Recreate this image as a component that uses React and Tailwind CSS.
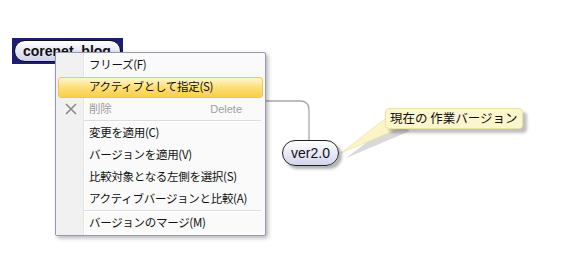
import React from "react";

const jp = { fontFamily: '"Noto Sans CJK JP", "Noto Sans", sans-serif' };

function Item({ label, right, icon, active, disabled }) {
  return (
    <div className="relative h-[22px] flex items-center">
      {active && (
        <div className="absolute left-[2px] right-[2px] top-[1px] bottom-0 rounded-[3px] border border-[#e8c66a] bg-gradient-to-b from-[#fff6cf] via-[#fddf76] to-[#f8cf4a]" />
      )}
      <div className="relative w-[30px] h-full flex items-center justify-center">
        {icon}
      </div>
      <div
        className={`relative pl-[3px] text-[11.5px] tracking-[-0.3px] leading-none ${disabled ? "text-[#9a9a9a]" : "text-[#111]"}`}
        style={jp}
      >
        {label}
      </div>
      {right && (
        <div className="relative ml-auto mr-[23px] text-[11px] text-[#a0a0a0] font-['Liberation_Sans',sans-serif]">
          {right}
        </div>
      )}
    </div>
  );
}

function Sep() {
  return (
    <div className="h-[2px] flex">
      <div className="w-[28px]" />
      <div className="flex-1 mr-[4px] border-t border-[#dcdcdc] border-b border-b-white" />
    </div>
  );
}

export default function App() {
  return (
    <div className="relative w-[566px] h-[271px] bg-white overflow-hidden">
      {/* connector line */}
      <svg className="absolute left-0 top-0" width="566" height="271">
        <path d="M262 101 H300 Q309 101 309 110 V141" fill="none" stroke="#a8a8a8" strokeWidth="1.3" />
        {/* callout tail shadow */}
        <polygon points="395,121 410,131 346,158" fill="#c9c9c9" opacity="0.7" />
        <polygon points="390,115 403,127 341,153" fill="#fbf4c6" stroke="#e6dca0" strokeWidth="0.6" />
      </svg>

      {/* corenode */}
      <div className="absolute left-[12px] top-[38px] w-[111px] h-[26px] bg-[#1d1d78] p-[2px]">
        <div className="w-full h-full rounded-full border border-[#111] bg-gradient-to-b from-white to-[#cfd0ec] flex items-center pl-[8px]">
          <span className="text-[14px] font-bold text-[#111] font-['Liberation_Sans',sans-serif]">corenet_blog</span>
        </div>
      </div>

      {/* ver2.0 node */}
      <div className="absolute left-[282px] top-[140px] w-[57px] h-[26px] rounded-full border border-[#222] bg-gradient-to-b from-white to-[#d3d4ee] flex items-center justify-center shadow-[3px_3px_3px_rgba(0,0,0,0.3)]">
        <span className="text-[14px] text-[#111] font-['Liberation_Sans',sans-serif]">ver2.0</span>
      </div>

      {/* callout */}
      <div className="absolute left-[385px] top-[108px] w-[138px] h-[21px] rounded-[4px] bg-[#fcf6cc] border border-[#ece3a6] shadow-[4px_4px_3px_rgba(0,0,0,0.25)] flex items-center pl-[4px]">
        <span className="text-[12.5px] text-[#111] leading-none" style={jp}>
          現在の 作業バージョン
        </span>
      </div>

      {/* context menu */}
      <div className="absolute left-[55px] top-[52px] w-[211px] h-[184px] bg-[#fafafa] border border-[#979aae] rounded-[2px] shadow-[2px_2px_4px_rgba(0,0,0,0.3)] overflow-hidden">
        <div className="absolute left-0 top-0 bottom-0 w-[27px] bg-[#f1f1f1]" />
        <div className="absolute left-[27px] top-0 bottom-0 w-[1px] bg-[#e2e3e3]" />
        <div className="absolute left-[28px] top-0 bottom-0 w-[1px] bg-white" />
        <div className="relative flex flex-col pt-[1px]">
          <Item label="フリーズ(F)" />
          <Item label="アクティブとして指定(S)" active />
          <Item
            label="削除"
            right="Delete"
            disabled
            icon={
              <svg width="12" height="12" viewBox="0 0 12 12">
                <path d="M1 1 L11 11 M11 1 L1 11" stroke="#8a8a8a" strokeWidth="1.6" />
              </svg>
            }
          />
          <Sep />
          <Item label="変更を適用(C)" />
          <Item label="バージョンを適用(V)" />
          <Item label="比較対象となる左側を選択(S)" />
          <Item label="アクティブバージョンと比較(A)" />
          <Sep />
          <Item label="バージョンのマージ(M)" />
        </div>
      </div>
    </div>
  );
}
